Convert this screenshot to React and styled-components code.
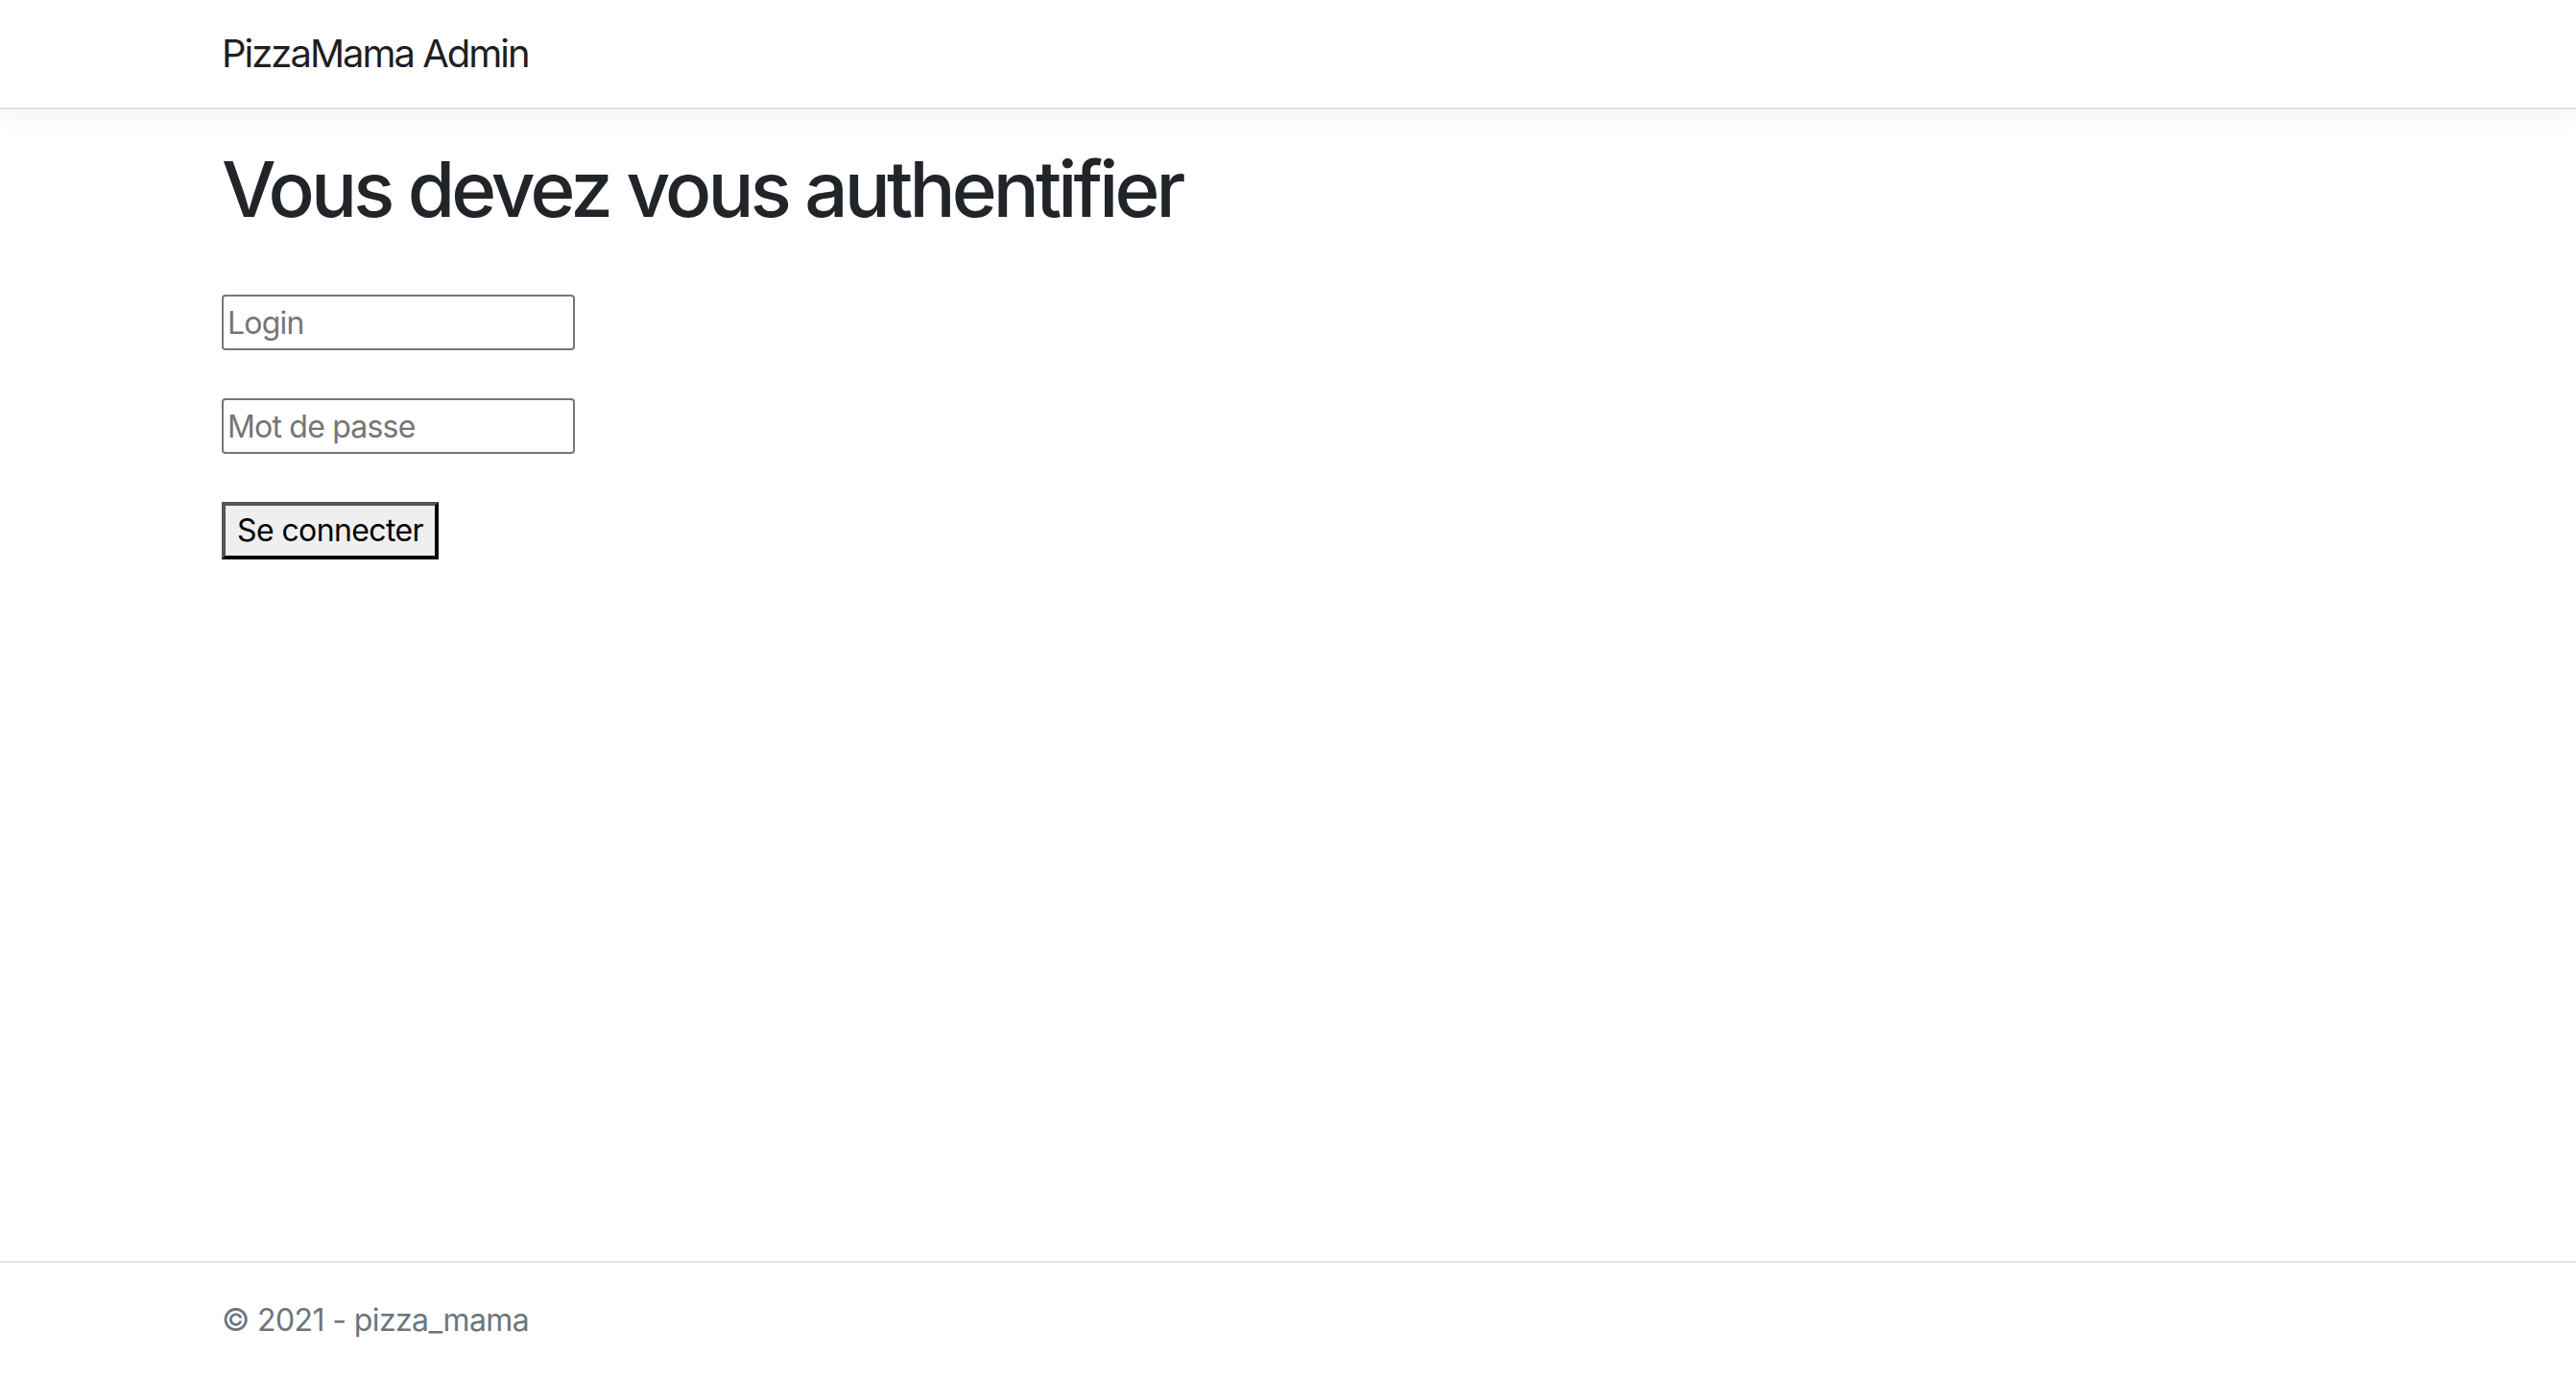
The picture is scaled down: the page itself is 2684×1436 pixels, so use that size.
import React from "react";
import styled, { createGlobalStyle } from "styled-components";

const GlobalStyle = createGlobalStyle`
  html, body { margin: 0; padding: 0; }
  body {
    font-family: Inter, "Noto Sans", "Liberation Sans", sans-serif;
    font-size: 32px;
    line-height: 1.5;
    color: #212529;
    background: #fff;
  }
  * { box-sizing: border-box; }
`;

const Page = styled.div`
  min-height: 100vh;
  display: flex;
  flex-direction: column;
`;

const Container = styled.div`
  width: 100%;
  max-width: 2280px;
  margin: 0 auto;
  padding: 0 30px 0 29px;
`;

const Header = styled.header`
  height: 114px;
  background: #fff;
  border-bottom: 2px solid #dee2e6;
  box-shadow: 0 8px 24px rgba(0, 0, 0, 0.05);
  display: flex;
  align-items: center;
`;

const Brand = styled.a`
  font-size: 40px;
  line-height: 60px;
  color: rgba(0, 0, 0, 0.9);
  text-decoration: none;
  letter-spacing: -2px;
`;

const Main = styled.main`
  flex: 1;
  padding-top: 35px;
`;

const Title = styled.h1`
  margin: 0 0 16px;
  font-size: 80px;
  line-height: 96px;
  font-weight: 500;
  color: #212529;
  letter-spacing: -3.9px;
`;

const Form = styled.form`
  margin-top: 62px;
  display: flex;
  flex-direction: column;
  align-items: flex-start;
  gap: 50px;
`;

const Input = styled.input`
  width: 368px;
  height: 58px;
  padding: 2px 4px;
  font-family: inherit;
  font-size: 32px;
  line-height: 48px;
  letter-spacing: -0.8px;
  color: #000;
  border: 2px solid #767676;
  border-radius: 4px;
  background: #fff;
  outline: none;
  &::placeholder { color: #757575; }
`;

const Button = styled.button`
  height: 60px;
  padding: 2px 12px;
  font-family: inherit;
  font-size: 32px;
  line-height: 48px;
  letter-spacing: -0.6px;
  color: #000;
  background: #efefef;
  border: 4px solid;
  border-color: #555 #000 #000 #555;
  border-radius: 0;
`;

const Footer = styled.footer`
  border-top: 2px solid #dee2e6;
  height: 122px;
  line-height: 120px;
  font-size: 32px;
  letter-spacing: -0.6px;
  color: #6c757d;
  white-space: nowrap;
`;

export default function App() {
  return (
    <Page>
      <GlobalStyle />
      <Header>
        <Container>
          <Brand href="#">PizzaMama Admin</Brand>
        </Container>
      </Header>
      <Main>
        <Container>
          <Title>Vous devez vous authentifier</Title>
          <Form onSubmit={(e) => e.preventDefault()}>
            <Input type="text" placeholder="Login" />
            <Input type="password" placeholder="Mot de passe" />
            <Button type="submit">Se connecter</Button>
          </Form>
        </Container>
      </Main>
      <Footer>
        <Container>© 2021 - pizza_mama</Container>
      </Footer>
    </Page>
  );
}
